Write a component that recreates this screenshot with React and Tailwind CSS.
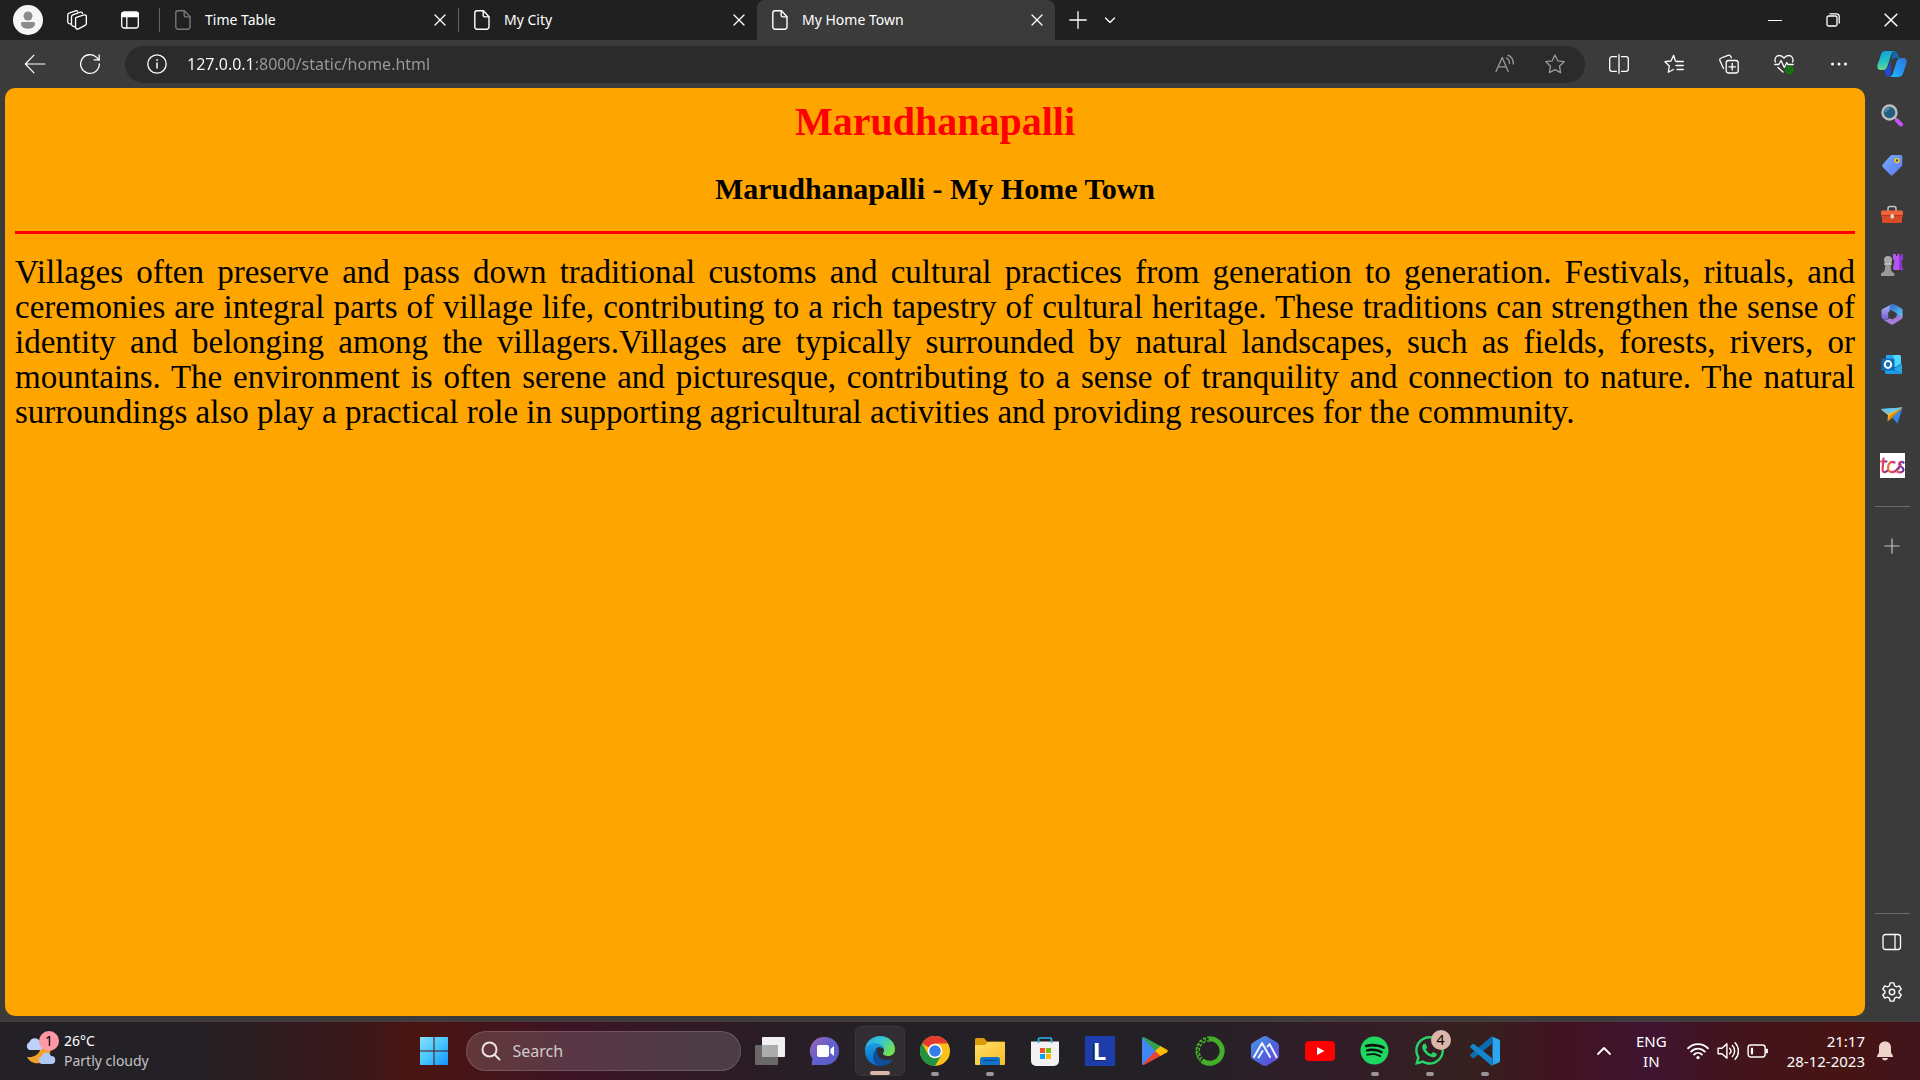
import React from "react";
import { FaSpotify, FaWhatsapp } from "react-icons/fa";

const stroke = {
  fill: "none",
  stroke: "currentColor",
  strokeWidth: 1.3,
  strokeLinecap: "round",
  strokeLinejoin: "round",
};

function Icon({ children, className = "size-5", ...rest }) {
  return (
    <svg viewBox="0 0 20 20" className={className} aria-hidden="true" {...stroke} {...rest}>
      {children}
    </svg>
  );
}

const DocIcon = () => (
  <svg viewBox="0 0 16 20" className="h-5 w-4" aria-hidden="true" {...stroke} strokeWidth={1.4}>
    <path d="M3 .8h6.5l5.5 6V17a2.2 2.2 0 0 1-2.2 2.2H3A2.2 2.2 0 0 1 .8 17V3A2.2 2.2 0 0 1 3 .8z" />
    <path d="M9.2 1v4.6c0 .8.5 1.3 1.3 1.3h4.3" />
  </svg>
);

const CloseIcon = ({ className = "size-3" }) => (
  <svg viewBox="0 0 12 12" className={className} aria-hidden="true" {...stroke}>
    <path d="M1 1l10 10M11 1L1 11" />
  </svg>
);

/* ---------- Tab strip ---------- */

const tabs = [
  { title: "Time Table", tone: "text-[#777777]" },
  { title: "My City", tone: "text-white" },
  { title: "My Home Town", tone: "text-white", active: true },
];

function Tab({ title, tone, active }) {
  return (
    <div
      className={
        active
          ? "flex h-full w-[298px] min-w-0 items-center rounded-t-lg bg-[#3b3b3b] pr-[10px] pl-[15px]"
          : "flex h-full w-[298px] min-w-0 items-center pr-[10px] pl-[15px]"
      }
    >
      <span className={tone}>
        <DocIcon />
      </span>
      <button className="min-w-0 flex-1 truncate pl-[14px] text-left text-sm text-white">{title}</button>
      <button aria-label={"Close " + title} className="flex size-4 items-center justify-center">
        <CloseIcon />
      </button>
    </div>
  );
}

function TabStrip() {
  return (
    <header className="flex h-10 items-center bg-[#202020]">
      <div className="flex w-[159px] shrink-0 items-center pl-[13px]">
        <button aria-label="Profile" className="size-[30px]">
          <svg viewBox="0 0 30 30" className="size-[30px]">
            <circle cx="15" cy="15" r="15" fill="#f6f6f6" />
            <circle cx="15" cy="11" r="4.5" fill="#8b8b8b" />
            <path d="M8 18.5c0-1 .7-1.6 1.6-1.6h10.8c.9 0 1.6.6 1.6 1.6 0 3.2-2.6 5.2-7 5.2s-7-2-7-5.2z" fill="#8b8b8b" />
          </svg>
        </button>
        <button aria-label="Workspaces" className="ml-[23px]">
          <Icon className="size-[22px]" strokeWidth={1.2}>
            <path d="M9.3 7.6l7.2-2.2c1.1-.3 2 .3 2 1.3v6.4c0 .8-.4 1.4-1.2 1.8l-6 3.1c-1.2.5-2.6 0-2.6-1.5V9.2c0-.8 0-1.3.6-1.6z" />
            <path d="M8.3 16.3l-2.1-.7c-.8-.3-1.2-.8-1.2-1.7V7c0-.9.4-1.4 1.2-1.7L13 2.9c.9-.3 1.8.1 2 1" />
            <path d="M4.700 13.8l-1.900-.6c-.8-.3-1.200-.8-1.200-1.700V5.500c0-.9.4-1.400 1.200-1.700l5.800-2.200c.8-.3 1.600 0 1.900.7" />
          </Icon>
        </button>
        <button aria-label="Tab actions menu" className="ml-8">
          <Icon className="size-5">
            <rect x="1.700" y="2" width="16.600" height="16" rx="2.500" />
            <path d="M2 3h16v3.500H2z" fill="currentColor" />
            <path d="M6.800 6v12" />
          </Icon>
        </button>
      </div>
      <nav className="flex h-full items-center">
        <span className="h-6 w-px bg-[#666666]" />
        <Tab {...tabs[0]} />
        <span className="h-6 w-px bg-[#666666]" />
        <Tab {...tabs[1]} />
        <Tab {...tabs[2]} />
      </nav>
      <button aria-label="New tab" className="ml-3">
        <Icon className="size-[22px]" strokeWidth={1.200}>
          <path d="M10 2.500v15M2.500 10h15" />
        </Icon>
      </button>
      <button aria-label="Search tabs" className="ml-[15px]">
        <svg viewBox="0 0 12 12" className="size-3" {...stroke}>
          <path d="M1.500 4l4.500 4.500L10.500 4" />
        </svg>
      </button>
      <div className="ml-auto flex items-center gap-11 pr-[22px]">
        <button aria-label="Minimize" className="flex size-[14px] items-center">
          <span className="h-px w-full bg-white" />
        </button>
        <button aria-label="Restore">
          <svg viewBox="0 0 14 14" className="size-[14px]" {...stroke}>
            <rect x="1" y="3" width="10" height="10" rx="1.500" />
            <path d="M4 .8h6.500a2.700 2.700 0 0 1 2.700 2.700V10" />
          </svg>
        </button>
        <button aria-label="Close window">
          <CloseIcon className="size-[14px]" />
        </button>
      </div>
    </header>
  );
}

/* ---------- Address bar ---------- */

function Toolbar() {
  return (
    <div className="flex h-12 items-center bg-[#3b3b3b]">
      <div className="flex w-[125px] shrink-0 items-center gap-[33px] pl-6">
        <button aria-label="Back">
          <Icon className="size-[22px]" strokeWidth={1.100}>
            <path d="M19 10H1.500M9 2L1.300 10 9 18" />
          </Icon>
        </button>
        <button aria-label="Refresh">
          <Icon className="size-[22px]" strokeWidth={1.200}>
            <path d="M18.500 10A8.500 8.500 0 1 1 16 4l2.300 2.300" />
            <path d="M18.300 1.800v4.500h-4.500" />
          </Icon>
        </button>
      </div>
      <form className="flex h-[37px] min-w-0 flex-1 items-center rounded-full bg-[#2b2b2b] pr-5 pl-[22px]">
        <button type="button" aria-label="Site information">
          <Icon>
            <circle cx="10" cy="10" r="9.200" />
            <path d="M10 9v5" strokeWidth="1.500" />
            <circle cx="10" cy="6" r=".6" fill="currentColor" strokeWidth=".6" />
          </Icon>
        </button>
        <input
          aria-label="Address"
          defaultValue="127.0.0.1:8000/static/home.html"
          className="ml-5 min-w-0 flex-1 bg-[linear-gradient(90deg,#ffffff_69px,#9a9a9a_69px)] bg-clip-text text-base text-transparent caret-white outline-none"
        />
        <button type="button" aria-label="Read aloud" className="text-[#9a9a9a]">
          <Icon>
            <path d="M1 17.500L7.200 3.500l6 14M3.200 12.800h8" />
            <path d="M11.500 4a6 6 0 0 1 3 5.500M13 1.200a9 9 0 0 1 5.300 8.800" />
          </Icon>
        </button>
        <button type="button" aria-label="Add to favourites" className="ml-[30px] text-[#9a9a9a]">
          <Icon>
            <path d="M10 1l2.800 5.800 6.300.9-4.600 4.500 1.100 6.400L10 15.600l-5.600 3 1.100-6.400L.9 7.700l6.300-.9z" />
          </Icon>
        </button>
      </form>
      <div className="flex shrink-0 items-center gap-[35px] pr-[13px] pl-6">
        <button aria-label="Split screen">
          <Icon>
            <path d="M7.500 2.700H3A2.300 2.300 0 0 0 .7 5v10A2.300 2.300 0 0 0 3 17.300h4.500M12.500 2.700H17A2.300 2.300 0 0 1 19.300 5v10a2.300 2.300 0 0 1-2.300 2.300h-4.500M10 .7v18.600" />
          </Icon>
        </button>
        <button aria-label="Favourites">
          <Icon>
            <path d="M13.500 7.500l-2-.3L9.600 1.300 7 7l-6 .7L5.300 12l-1 6.300 5.200-2.800" />
            <path d="M13 7.500h6.300M12 11.500h7.300M13 15.500h6.300" />
          </Icon>
        </button>
        <button aria-label="Collections">
          <Icon>
            <rect x="7.200" y="6.500" width="12" height="12.500" rx="2.500" />
            <path d="M13.200 9.500v6.500M10 12.800h6.500" />
            <path d="M4.500 14.500L1 6.800C.5 5.500.9 4.500 2.200 4L9 1.300c1.300-.5 2.300 0 2.800 1.200l.5 1.300" />
          </Icon>
        </button>
        <button aria-label="Browser essentials">
          <Icon>
            <path d="M1.300 8C.2 4 2.500 1.500 5.300 1.500c2 0 3.500 1 4.700 2.700 1.200-1.700 2.700-2.700 4.700-2.700 2.800 0 5.100 2.500 4 6.500" />
            <path d="M.8 10.500h4l2.200-4 3.300 7 2.500-5 1 2h5.400M4 13.500l5 4.500" />
            <circle cx="15.500" cy="16" r="4" fill="#107c10" stroke="#107c10" strokeWidth="1" />
            <path d="M13.800 16l1.300 1.300 2.300-2.500" stroke="#3b3b3b" strokeWidth="1" />
          </Icon>
        </button>
        <button aria-label="Settings and more">
          <Icon fill="currentColor" stroke="none">
            <circle cx="3.500" cy="10" r="1.500" />
            <circle cx="10" cy="10" r="1.500" />
            <circle cx="16.500" cy="10" r="1.500" />
          </Icon>
        </button>
        <button aria-label="Copilot" className="-ml-[7px]">
          <svg viewBox="0 0 30 28" className="h-7 w-[30px]">
            <defs>
              <linearGradient id="cpA" x1="0" y1="0" x2="0" y2="1">
                <stop offset="0" stopColor="#12a5dc" />
                <stop offset=".5" stopColor="#20bfc4" />
                <stop offset="1" stopColor="#66d892" />
              </linearGradient>
              <linearGradient id="cpB" x1="1" y1="0" x2="0" y2="1">
                <stop offset="0" stopColor="#2d74dc" />
                <stop offset=".55" stopColor="#2398f5" />
                <stop offset="1" stopColor="#19c5fc" />
              </linearGradient>
            </defs>
            <path d="M16 1c3.500 0 4.400 1.600 5.200 4.200.5 1.600 1.300 2.800 3 2.800h-6c-2.200 0-3.200 1.600-3.800 3.800z" fill="#1169b5" />
            <path d="M6 20c3 0 4-1 5-3l3-7v13c-.8 2.500-1 4-3.500 4C8 27 8.700 20 6 20z" fill="#1f49d2" />
            <path d="M8.500 1H18c-2.400 0-3.300 1.800-4 4l-3.500 11c-.8 2.400-2 4-4.700 4H3.500C.8 20-.2 17.500.5 15L4 4.500C4.800 2.200 6 1 8.500 1z" fill="url(#cpA)" />
            <path d="M21.500 27H12c2.400 0 3.300-1.800 4-4l3.500-11c.8-2.400 2-4 4.700-4h2.300c2.700 0 3.700 2.500 3 5L26 23.500c-.8 2.300-2 3.500-4.500 3.500z" fill="url(#cpB)" />
          </svg>
        </button>
      </div>
    </div>
  );
}

/* ---------- Edge sidebar ---------- */

const SearchApp = () => (
  <svg viewBox="0 0 24 24" className="size-6">
    <path d="M15 15l3 3" stroke="#a9a9a9" strokeWidth="2" />
    <path d="M17 17.500l4 4" stroke="#c850f5" strokeWidth="4" strokeLinecap="round" />
    <circle cx="9.500" cy="9.500" r="7" fill="#245f82" stroke="#bdbdbd" strokeWidth="2.400" />
    <path d="M5.500 9a4.200 4.200 0 0 1 4-3.500" stroke="#5d9dbd" strokeWidth="1.500" fill="none" />
  </svg>
);

const TagApp = () => (
  <svg viewBox="0 0 24 24" className="size-6">
    <defs>
      <linearGradient id="tag" x1="0" y1="0" x2="1" y2="1">
        <stop offset="0" stopColor="#76adff" />
        <stop offset="1" stopColor="#5a78ee" />
      </linearGradient>
    </defs>
    <path d="M12 2h8.500A1.800 1.800 0 0 1 22.300 3.800v8c0 .6-.2 1-.6 1.400l-8.500 8.500a2 2 0 0 1-2.900 0l-7.500-7.500a2 2 0 0 1 0-2.900l7.800-8.700c.4-.4.800-.6 1.400-.6z" fill="url(#tag)" />
    <circle cx="17" cy="7.500" r="1.900" fill="#38406a" stroke="#f8cc16" strokeWidth="1.500" />
  </svg>
);

const ToolboxApp = () => (
  <svg viewBox="0 0 24 24" className="size-6">
    <path d="M8 8V5.500C8 4 8.800 3.500 10 3.500h4c1.200 0 2 .5 2 2V8" fill="none" stroke="#c3c3c3" strokeWidth="1.500" />
    <path d="M2 12h20v6.500a1.500 1.500 0 0 1-1.500 1.500h-17A1.500 1.500 0 0 1 2 18.500z" fill="#d94d26" />
    <path d="M2.500 7.500h19A1.500 1.500 0 0 1 23 9v4.500H1V9a1.500 1.500 0 0 1 1.500-1.500z" fill="#f2653a" />
    <path d="M1 12h22v1.500H1z" fill="#b93819" />
    <rect x="10.500" y="11" width="3.500" height="4.500" rx="1.500" fill="#d9d9d9" />
  </svg>
);

const GamesApp = () => (
  <svg viewBox="0 0 24 24" className="size-6">
    <path d="M14 1h2v2h1.500V1h2.500v2h1.500V1H23v5l-1.800 2 .8 6.500 1.500 2.500H14l-1-2 1.500-7L13 6V1z" fill="#b457f2" />
    <path d="M19 1h1v2h1.500V1H23v5l-2 2 1 6.500 1 2.500h-4z" fill="#8e35d5" />
    <path d="M5.500 11h5l.8 7 3 2.500V23H1v-2.500L4.500 18z" fill="#999999" />
    <circle cx="8" cy="7" r="4" fill="#aaaaaa" />
    <rect x="4" y="10" width="8" height="2" rx="1" fill="#b9b9b9" />
  </svg>
);

const M365App = () => (
  <svg viewBox="0 0 24 24" className="size-6">
    <defs>
      <linearGradient id="m1" x1="0" y1="0" x2="1" y2="1">
        <stop offset="0" stopColor="#315fc9" />
        <stop offset="1" stopColor="#57d0f2" />
      </linearGradient>
      <linearGradient id="m2" x1="0" y1="0" x2="0" y2="1">
        <stop offset="0" stopColor="#a9b7f6" />
        <stop offset="1" stopColor="#765ad0" />
      </linearGradient>
    </defs>
    <path d="M10.500 1.800c1.300-.9 3.200-.9 4.500-.1L21 5c1 .6 1.500 1.500 1.500 2.600v6.900L16.500 11 8 6z" fill="url(#m1)" />
    <path d="M12 1.200C10.500 2 9.500 3.500 9.500 5v9l-4 3.500L3 16c-1-.6-1.500-1.400-1.500-2.500V8c0-1 .5-1.800 1.400-2.300z" fill="url(#m2)" />
    <path d="M22.500 13.500c0 1.700-.5 2.500-1.500 3.100l-7 4.500c-1.200.8-2.600.8-3.800 0L3 16.500c2 .9 3.500.7 5-.2l8-4.800z" fill="#a77bd8" />
    <path d="M11.500 7.200l5 2.900v4l-4.300 2.500-4-2.400V9.500z" fill="#3b3b3b" />
  </svg>
);

const OutlookApp = () => (
  <svg viewBox="0 0 24 24" className="size-6">
    <rect x="6" y="2" width="15" height="12" rx="1.500" fill="#50d9ff" />
    <path d="M6 2h7.500v10H6z" fill="#28a8ea" />
    <path d="M5 10l9 5 8-5v9.500A1.500 1.500 0 0 1 20.500 21H7a2 2 0 0 1-2-2z" fill="#0c69b8" />
    <path d="M5 13l17 8H7a2 2 0 0 1-2-2z" fill="#1b9ce5" />
    <path d="M22 11v10l-9-5z" fill="#36c4f5" opacity=".7" />
    <rect x="1.500" y="5.500" width="13" height="12" rx="1.300" fill="#0f6cbd" />
    <ellipse cx="8" cy="11.500" rx="3.200" ry="3.400" fill="none" stroke="white" strokeWidth="2" />
  </svg>
);

const DropApp = () => (
  <svg viewBox="0 0 24 24" className="size-6">
    <path d="M1 6l21.500-1.500L9 13z" fill="#45a4e8" />
    <path d="M1 6.500L22.500 4.500 7.500 18 8 12z" fill="#f8b81f" />
    <path d="M22.500 4.500L11 13l6.500 7.500z" fill="#3486e8" />
    <path d="M22.500 4.500L9.500 13l-2 5.500 4-3z" fill="#d78b13" />
    <path d="M1 6l21.500-1.500L8 11z" fill="#62c5f3" />
  </svg>
);

const TcsApp = () => (
  <svg viewBox="0 0 25 25" className="size-[25px]">
    <defs>
      <linearGradient id="tcs" x1="0" x2="1">
        <stop offset="0" stopColor="#f2722e" />
        <stop offset=".45" stopColor="#dd2e80" />
        <stop offset="1" stopColor="#533aa0" />
      </linearGradient>
    </defs>
    <path d="M0 0h25v25H0z" fill="white" />
    <g fill="none" stroke="url(#tcs)" strokeWidth="2.200" strokeLinecap="round">
      <path d="M3.500 5.500l-1 11c0 3 2.500 3.500 5 1M.5 8.500h6" />
      <path d="M14.500 9.500c-3-2-6.500.5-6.500 5s3.500 5.800 7.500 3.500c3-1.800 4.500-5 5-7" />
      <path d="M23.500 9.500c-2-1.500-4.500-.5-4.500 1.500 0 2.500 5 3 4.500 6-.5 2.800-4.500 3-6.500 1.500" />
    </g>
  </svg>
);

const sideApps = [
  ["Search", SearchApp],
  ["Shopping", TagApp],
  ["Tools", ToolboxApp],
  ["Games", GamesApp],
  ["Microsoft 365", M365App],
  ["Outlook", OutlookApp],
  ["Drop", DropApp],
  ["TCS", TcsApp],
];

function Sidebar() {
  return (
    <aside className="flex w-[55px] shrink-0 flex-col items-center pt-0.5 pr-px">
      <div className="flex flex-col items-center">
        {sideApps.map(([name, App]) => (
          <button key={name} aria-label={name} className="flex h-[50px] w-12 items-center justify-center">
            <App />
          </button>
        ))}
      </div>
      <span className="mt-4 h-px w-[35px] bg-[#6b6b6b]" />
      <button aria-label="Customise" className="mt-[30px] text-[#c4c4c4]">
        <Icon className="size-[18px]">
          <path d="M10 2v16M2 10h16" />
        </Icon>
      </button>
      <span className="mt-auto h-px w-[35px] bg-[#6b6b6b]" />
      <button aria-label="Hide sidebar" className="mt-[18px]">
        <Icon>
          <rect x="1" y="2.500" width="17.500" height="15" rx="2.500" />
          <path d="M13 2.500v15" />
        </Icon>
      </button>
      <button aria-label="Sidebar settings" className="mt-[29px] mb-[13px]">
        <svg viewBox="0 0 24 24" className="size-[22px]" {...stroke} strokeWidth={1.500}>
          <path d="M10 2h4l.8 3.200 2 1.200 3.200-1 2 3.500L19.700 11v2l2.300 2.100-2 3.500-3.200-1-2 1.200L14 22h-4l-.8-3.200-2-1.200-3.200 1-2-3.500L4.300 13v-2L2 8.900l2-3.500 3.200 1 2-1.200z" />
          <circle cx="12" cy="12" r="3" />
        </svg>
      </button>
    </aside>
  );
}

/* ---------- Taskbar ---------- */

const StartIcon = () => (
  <svg viewBox="0 0 30 30" className="size-[30px]">
    <defs>
      <linearGradient id="win" x1="0" y1="0" x2="30" y2="30" gradientUnits="userSpaceOnUse">
        <stop offset="0" stopColor="#8be0fb" />
        <stop offset=".5" stopColor="#48c6fb" />
        <stop offset="1" stopColor="#0d8ffb" />
      </linearGradient>
    </defs>
    <path d="M1 1h13.500v13.500H1zM15.500 1H29v13.500H15.500zM1 15.500h13.500V29H1zM15.500 15.500H29V29H15.500z" fill="url(#win)" />
  </svg>
);

const TaskViewIcon = () => (
  <svg viewBox="0 0 30 30" className="size-[30px]">
    <rect x="7" y="1" width="23" height="20" rx="1" fill="#f0f0f0" />
    <rect x="0" y="9" width="23" height="20" rx="1" fill="#696969" />
    <path d="M7 9h16v12H7z" fill="#acacac" />
  </svg>
);

const ChatIcon = () => (
  <svg viewBox="0 0 30 30" className="size-[30px]">
    <defs>
      <linearGradient id="chat" x1="0" y1="0" x2="1" y2="1">
        <stop offset="0" stopColor="#9b65b0" />
        <stop offset=".5" stopColor="#6360cf" />
        <stop offset="1" stopColor="#5558c9" />
      </linearGradient>
    </defs>
    <path d="M15 1a14 14 0 1 1 0 28H1.500l1-6A14 14 0 0 1 15 1z" fill="url(#chat)" />
    <rect x="7" y="9" width="12" height="12" rx="2" fill="white" />
    <path d="M20.500 13l3.500-3v10l-3.500-3z" fill="white" />
  </svg>
);

const EdgeIcon = () => (
  <svg viewBox="0 0 30 30" className="size-[30px]">
    <defs>
      <linearGradient id="edTop" x1="0" y1="0" x2="1" y2=".6">
        <stop offset="0" stopColor="#2aa4e2" />
        <stop offset=".5" stopColor="#36c5d5" />
        <stop offset="1" stopColor="#73e04d" />
      </linearGradient>
      <linearGradient id="edMid" x1="0" y1="0" x2="0" y2="1">
        <stop offset="0" stopColor="#1b9de2" />
        <stop offset="1" stopColor="#0869cb" />
      </linearGradient>
    </defs>
    <path d="M0 15C0 6.500 6.500 0 15 0s15 6 15 13c0 4.500-3 7-7 7-3 0-5-1-5-2.500 0-1 1-1.500 1-3.500 0-3-3-5.500-7.500-5.500C6 8.500 1 11 0 15z" fill="url(#edTop)" />
    <path d="M0 15c0-5 5-8 10.500-8 5 0 8.500 3 8.500 6.500 0 0-1.500-2.500-4.500-2.500-3 0-5 3.500-5 7 0 6 5 10.500 11 10C9.500 33 0 25 0 15z" fill="url(#edMid)" />
    <path d="M12.500 13.500C11 20 16 24.500 22 24.300c3 0 5-.8 6-1.300-2 4-6.500 7-12 7-5 0-8-5-8-9.500 0-4 2-6 4.500-7z" fill="#104f97" />
  </svg>
);

const ChromeIcon = () => (
  <svg viewBox="0 0 30 30" className="size-[30px]">
    <circle cx="15" cy="15" r="15" fill="#fbc116" />
    <path d="M15 15L2 7.500A15 15 0 0 1 28 7.500H15z" fill="#e33b2e" />
    <path d="M2 7.500A15 15 0 0 0 15 30l6.500-11.300L15 15l-6.500 3.700z" fill="#229342" />
    <circle cx="15" cy="15" r="7.300" fill="white" />
    <circle cx="15" cy="15" r="5.800" fill="#347ce8" />
  </svg>
);

const FolderIcon = () => (
  <svg viewBox="0 0 30 30" className="size-[30px]">
    <defs>
      <linearGradient id="fold" x1="0" y1="0" x2="1" y2="1">
        <stop offset="0" stopColor="#ffdd68" />
        <stop offset="1" stopColor="#f8be25" />
      </linearGradient>
    </defs>
    <path d="M1.500 2H9l3 3.500h17a1 1 0 0 1 1 1V10H0V3.500A1.500 1.500 0 0 1 1.500 2z" fill="#dc9a08" />
    <path d="M0 9h10l3-3h17v22a1 1 0 0 1-1 1H1a1 1 0 0 1-1-1z" fill="url(#fold)" />
    <path d="M5 29v-5.500A2.500 2.500 0 0 1 7.500 21h15a2.500 2.500 0 0 1 2.500 2.500V29z" fill="#1473c8" />
    <path d="M8.500 24.500h13" stroke="#0b4d94" strokeWidth="1.300" />
  </svg>
);

const StoreIcon = () => (
  <svg viewBox="0 0 30 30" className="size-[30px]">
    <path d="M1 5.500h28V25a5 5 0 0 1-5 5H6a5 5 0 0 1-5-5z" fill="#f2f2f2" />
    <path d="M8.500 7V3.200a1.200 1.200 0 0 1 1.200-1.200h10.600a1.200 1.200 0 0 1 1.200 1.200V7" fill="none" stroke="#25b5ed" strokeWidth="1.700" />
    <path d="M10 12h5v5h-5z" fill="#f35325" />
    <path d="M16 12h5v5h-5z" fill="#81bc06" />
    <path d="M10 18h5v5h-5z" fill="#05a6f0" />
    <path d="M16 18h5v5h-5z" fill="#ffba08" />
  </svg>
);

const LIcon = () => (
  <span className="flex size-[30px] items-center justify-center bg-[#1d3dac] text-2xl leading-6 font-bold text-white [text-shadow:-2px_1px_0_#0e2b59]">
    L
  </span>
);

const PlayIcon = () => (
  <svg viewBox="0 0 30 30" className="size-[30px]">
    <path d="M2 2.500C2 1.500 3 .8 4 1.300L16 15 4 28.700c-1 .5-2-.2-2-1.200z" fill="#4285f4" />
    <path d="M2.500 1.500C3 1 4 1 4.800 1.500L21 10.300 15.500 15z" fill="#34a04f" />
    <path d="M2.500 28.500c.5.500 1.500.5 2.300 0L21 19.700 15.500 15z" fill="#ea4335" />
    <path d="M20.500 10l6.500 3.700c1 .6 1 2 0 2.600L20.500 20 15 15z" fill="#fbbc04" />
  </svg>
);

const AnacondaIcon = () => (
  <svg viewBox="0 0 30 30" className="size-[30px]" fill="none" stroke="#43b02a">
    <path d="M15 2.700A12.300 12.300 0 1 1 7 24.500" strokeWidth="5" />
    <path d="M15 1A14 14 0 0 0 5.500 25M15 5A10 10 0 0 0 7 22" strokeWidth="1.600" strokeDasharray="3 1.500" />
    <path d="M15 3A12 12 0 0 0 6 24" strokeWidth="2.500" strokeDasharray="1.500 2.500" />
  </svg>
);

const HexIcon = () => (
  <svg viewBox="0 0 30 30" className="size-[30px]">
    <defs>
      <linearGradient id="hex" x1="0" y1="0" x2="1" y2="1">
        <stop offset="0" stopColor="#4c9de5" />
        <stop offset=".5" stopColor="#4b68dc" />
        <stop offset="1" stopColor="#6940da" />
      </linearGradient>
    </defs>
    <path d="M13 .6a4 4 0 0 1 4 0l10 5.800a4 4 0 0 1 2 3.400v10.400a4 4 0 0 1-2 3.400l-10 5.800a4 4 0 0 1-4 0L3 23.600a4 4 0 0 1-2-3.400V9.800a4 4 0 0 1 2-3.400z" fill="url(#hex)" />
    <path d="M4 21L12 7l8 14M8.500 21.500l4-6.500M17.500 10.500l2-2.500 7 13" fill="none" stroke="#eef3ff" strokeWidth="2" strokeLinecap="round" strokeLinejoin="round" />
  </svg>
);

const YoutubeIcon = () => (
  <svg viewBox="0 0 30 30" className="size-[30px]">
    <rect x="0" y="5" width="30" height="20" rx="4" fill="#ff0000" />
    <path d="M12 11l7.500 4-7.500 4z" fill="white" />
  </svg>
);

const SpotifyIcon = () => (
  <span className="flex size-[26px] items-center justify-center rounded-full bg-[#101010]">
    <FaSpotify className="size-[29px] shrink-0 text-[#1ed760]" />
  </span>
);

const WhatsappIcon = () => <FaWhatsapp className="size-[33px] text-[#25d366]" />;

const CodeIcon = () => (
  <svg viewBox="0 0 30 30" className="size-[30px]">
    <path d="M0 19.500l2.500 2.400c.5.400 1 .4 1.500 0L22 8V0L.3 18.500c-.4.300-.5.700-.3 1z" fill="#0b6bb0" />
    <path d="M0 10.500L2.500 8.100c.5-.4 1-.4 1.500 0L22 22v8L.3 11.500c-.4-.300-.5-.7-.3-1z" fill="#1385cb" />
    <path d="M21.500.3L29 3.500a1.600 1.600 0 0 1 1 1.500v20a1.600 1.600 0 0 1-1 1.500l-7.500 3.200c.7-.4 1-1 1-2V2.300c0-1-.3-1.600-1-2z" fill="#29a8f1" />
  </svg>
);

const taskApps = [
  { name: "Task view", App: TaskViewIcon },
  { name: "Chat", App: ChatIcon },
  { name: "Microsoft Edge", App: EdgeIcon, active: true },
  { name: "Google Chrome", App: ChromeIcon, running: true },
  { name: "File Explorer", App: FolderIcon, running: true },
  { name: "Microsoft Store", App: StoreIcon },
  { name: "Lenovo", App: LIcon },
  { name: "Google Play", App: PlayIcon },
  { name: "Anaconda", App: AnacondaIcon },
  { name: "Studio", App: HexIcon },
  { name: "YouTube", App: YoutubeIcon },
  { name: "Spotify", App: SpotifyIcon, running: true },
  { name: "WhatsApp", App: WhatsappIcon, running: true, badge: "4" },
  { name: "Visual Studio Code", App: CodeIcon, running: true },
];

function TaskButton({ name, App, active, running, badge }) {
  return (
    <button
      aria-label={name}
      className={
        active
          ? "relative flex h-[50px] w-[50px] items-center justify-center rounded-md border border-[#3a373b] bg-[#302e33]"
          : "relative flex h-[50px] w-[50px] items-center justify-center"
      }
    >
      <App />
      {active && <span className="absolute bottom-0 left-1/2 h-1 w-5 -translate-x-1/2 rounded-full bg-[#dcb5aa]" />}
      {running && <span className="absolute bottom-0 left-1/2 h-1 w-2 -translate-x-1/2 rounded-full bg-[#9c969b]" />}
      {badge && (
        <span className="absolute top-1 right-1 flex size-5 items-center justify-center rounded-full bg-[#dcb5aa] text-sm leading-5 text-black">
          {badge}
        </span>
      )}
    </button>
  );
}

function Taskbar() {
  return (
    <footer className="grid h-[59px] grid-cols-[1fr_auto_1fr] items-center bg-[linear-gradient(90deg,#242126_0%,#242126_10%,#37191c_17%,#4a1412_22%,#3d1526_30%,#2b1c26_39%,#242126_45%,#242126_61%,#311d29_69%,#36201f_77%,#421320_81%,#3f1430_86%,#42141c_90%,#471414_96%,#3f141d_100%)] shadow-[inset_0_1px_0_#4a3d40]">
      <button className="flex items-center gap-2 justify-self-start pl-6 text-left">
        <span className="relative">
          <svg viewBox="0 0 32 32" className="size-8">
            <path d="M27 7c1 9-2 18-11 21-6 1.500-11-2-13-6 8 1 14-4 15-13z" fill="#f2a128" />
            <path d="M5 15a4.500 4.500 0 0 1 .5-8 5.500 5.500 0 0 1 10.500 0 4.500 4.500 0 0 1 1 8z" fill="#bdd2fa" />
            <path d="M17 29a4 4 0 0 1 .5-7.500 5 5 0 0 1 9.500-.5 4 4 0 0 1 .5 8z" fill="#afc8f5" />
          </svg>
          <span className="absolute -top-1 right-[-3px] flex size-5 items-center justify-center rounded-full bg-[#ff99a4] text-sm leading-5 text-black">
            1
          </span>
        </span>
        <span className="block">
          <span className="block text-sm leading-5 text-white">26°C</span>
          <span className="block text-sm leading-5 text-[#c5c1c5]">Partly cloudy</span>
        </span>
      </button>

      <div className="flex items-center">
        <button aria-label="Start" className="flex size-[50px] items-center justify-center">
          <StartIcon />
        </button>
        <label className="ml-[7px] flex h-10 w-[275px] items-center rounded-full border border-white/15 bg-white/15 pl-[14px] text-[#e8e2e4]">
          <Icon strokeWidth={2}>
            <circle cx="8.500" cy="8.500" r="7" />
            <path d="M13.700 13.700L18.500 18.500" />
          </Icon>
          <input
            aria-label="Search"
            placeholder="Search"
            className="ml-3 w-40 bg-transparent text-base outline-none placeholder:text-[#d2c9cd]"
          />
        </label>
        <div className="mr-0.5 ml-1 flex items-center gap-[5px]">
          {taskApps.map((item) => (
            <TaskButton key={item.name} {...item} />
          ))}
        </div>
      </div>

      <div className="flex items-center justify-self-end pr-[27px] text-white">
        <button aria-label="Show hidden icons">
          <svg viewBox="0 0 16 16" className="size-4" {...stroke} strokeWidth={1.800}>
            <path d="M2 11l6-6 6 6" />
          </svg>
        </button>
        <button className="ml-6 text-center text-[15px] leading-5">
          <span className="block">ENG</span>
          <span className="block">IN</span>
        </button>
        <button aria-label="Network, volume and battery" className="ml-5 flex items-center gap-2">
          <Icon className="size-[22px]" strokeWidth={1.700}>
            <path d="M1 7.500c5-5 13-5 18 0M3.800 10.500c3.500-3.500 8.900-3.500 12.400 0M6.500 13.200c2-2 5-2 7 0" />
            <circle cx="10" cy="16" r="1.500" fill="currentColor" stroke="none" />
          </Icon>
          <Icon className="size-[22px]">
            <path d="M1 7.500h3.500L9 3.500v13l-4.500-4H1zM11.500 7.500c1.500 1.500 1.500 3.500 0 5M14 5c2.700 2.800 2.700 7.200 0 10M16.500 2.500c4 4.200 4 10.800 0 15" />
          </Icon>
          <Icon className="size-[22px]">
            <rect x="1" y="4.500" width="15.500" height="11" rx="2.500" />
            <path d="M3.500 7h2v6h-2z" fill="currentColor" stroke="none" />
            <path d="M17 8h2v4h-2z" fill="currentColor" stroke="none" />
          </Icon>
        </button>
        <button className="ml-[18px] text-right text-[15px] leading-5">
          <span className="block">21:17</span>
          <span className="block">28-12-2023</span>
        </button>
        <button aria-label="Notifications" className="ml-3">
          <svg viewBox="0 0 16 20" className="h-5 w-4" fill="#eed3cb">
            <path d="M8 .5c3.700 0 6 2.600 6 6v5l2 3.500v1H0v-1l2-3.500v-5c0-3.400 2.300-6 6-6zM5 17h6c-.3 1.600-1.500 2.500-3 2.500S5.300 18.600 5 17z" />
          </svg>
        </button>
      </div>
    </footer>
  );
}

export default function App() {
  return (
    <div className="flex min-h-screen flex-col bg-[#3b3b3b] font-['Noto_Sans',sans-serif] text-white">
      <TabStrip />
      <Toolbar />
      <div className="flex flex-1 pb-[5px] pl-[5px]">
        <main className="min-w-0 flex-1 rounded-[10px] bg-[#ffa500] px-[10px] pt-[11px] font-['Liberation_Serif',serif] text-black">
          <h1 className="text-center text-[40px] leading-[46px] font-bold text-[#ff0000]">Marudhanapalli</h1>
          <h2 className="mt-[27px] text-center text-[30px] leading-[34px] font-bold">Marudhanapalli - My Home Town</h2>
          <hr className="mt-[25px] border-t-[3px] border-[#ff0000]" />
          <p className="mt-[21px] text-justify text-[33px] leading-[35px]">
            Villages often preserve and pass down traditional customs and cultural practices from generation to
            generation. Festivals, rituals, and ceremonies are integral parts of village life, contributing to a rich
            tapestry of cultural heritage. These traditions can strengthen the sense of identity and belonging among the
            villagers.Villages are typically surrounded by natural landscapes, such as fields, forests, rivers, or
            mountains. The environment is often serene and picturesque, contributing to a sense of tranquility and
            connection to nature. The natural surroundings also play a practical role in supporting agricultural
            activities and providing resources for the community.
          </p>
        </main>
        <Sidebar />
      </div>
      <Taskbar />
    </div>
  );
}
